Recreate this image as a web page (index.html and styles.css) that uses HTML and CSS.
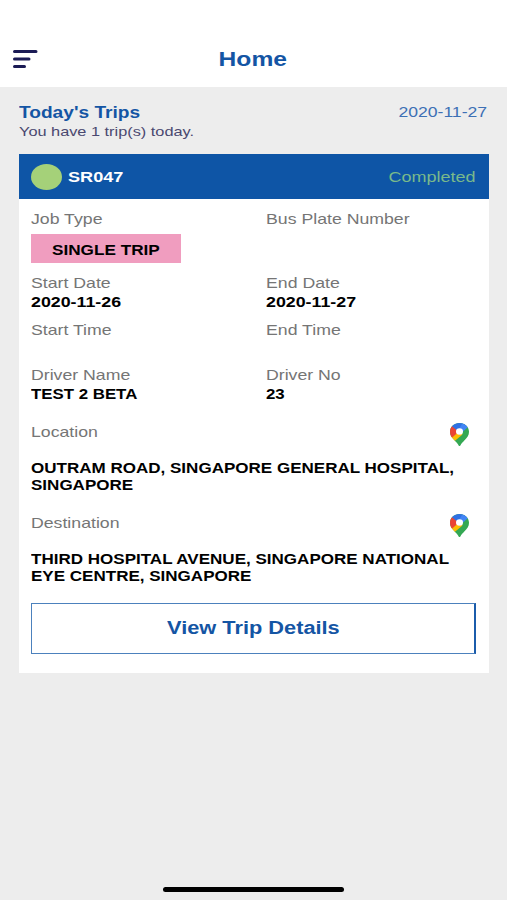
FILE: index.html
```html
<!DOCTYPE html>
<html lang="en">
<head>
<meta charset="utf-8">
<title>Home</title>
<link rel="stylesheet" href="styles.css">
</head>
<body>
<svg class="defs" width="0" height="0" aria-hidden="true">
  <defs>
    <clipPath id="pin-shape"><path d="M9.5 0C4.2 0 0 3.900 0 8.800c0 3.500 1.700 5.500 4 8 2.200 2.400 3.800 3.800 4.500 5.500.4 1 1.600 1 2 0 .7-1.700 2.300-3.100 4.500-5.500 2.300-2.500 4-4.500 4-8C19 3.900 14.800 0 9.500 0z"/></clipPath>
    <symbol id="pin" viewBox="0 0 19 23">
      <g clip-path="url(#pin-shape)">
        <path fill="#34a853" d="M0 0h19v23H0z"/>
        <path fill="#fbbc04" d="M-1 14 6.500 5.500 12.500 11.500 3.500 19z"/>
        <path fill="#ea4335" d="M-1 2.500 2 2.800 9 8.500 1 15.500-1 15z"/>
        <path fill="#2f70e4" d="M1.800 3 4-1h9l4.300 4.500L9.500 12 7 7.500z"/>
        <path fill="#4285f4" d="M12.500 0 18 4 12 9.500 8.500 7z"/>
      </g>
      <ellipse cx="9.500" cy="8.500" rx="3.500" ry="3.200" fill="#fff"/>
    </symbol>
  </defs>
</svg>
<div class="screen">
  <header class="topbar">
    <svg class="menu" width="26" height="20" viewBox="0 0 26 20"><path d="M2.500 2.500H24M2.500 10H17M2.500 17.500H12.500"/></svg>
    <h1 class="title"><span class="t t-center">Home</span></h1>
  </header>
  <main class="content">
    <section class="summary">
      <div>
        <h2 class="heading"><span class="t">Today's Trips</span></h2>
        <p class="sub"><span class="t">You have 1 trip(s) today.</span></p>
      </div>
      <p class="date"><span class="t t-right">2020-11-27</span></p>
    </section>
    <article class="card">
      <div class="card-head">
        <span class="dot"></span>
        <span class="code"><span class="t">SR047</span></span>
        <span class="status"><span class="t t-right">Completed</span></span>
      </div>
      <div class="card-body">
        <div class="row job">
          <div><p class="label"><span class="t">Job Type</span></p><p class="badge"><span class="t t-center">SINGLE TRIP</span></p></div>
          <div><p class="label"><span class="t">Bus Plate Number</span></p></div>
        </div>
        <div class="row dates">
          <div><p class="label"><span class="t">Start Date</span></p><p class="value"><span class="t">2020-11-26</span></p></div>
          <div><p class="label"><span class="t">End Date</span></p><p class="value"><span class="t">2020-11-27</span></p></div>
        </div>
        <div class="row times">
          <div><p class="label"><span class="t">Start Time</span></p></div>
          <div><p class="label"><span class="t">End Time</span></p></div>
        </div>
        <div class="row driver">
          <div><p class="label"><span class="t">Driver Name</span></p><p class="value"><span class="t">TEST 2 BETA</span></p></div>
          <div><p class="label"><span class="t">Driver No</span></p><p class="value"><span class="t">23</span></p></div>
        </div>
        <section class="place">
          <div class="place-head"><p class="label"><span class="t">Location</span></p><svg class="pin" width="19" height="23"><use href="#pin"/></svg></div>
          <p class="address"><span class="t">OUTRAM ROAD, SINGAPORE GENERAL HOSPITAL,<br>SINGAPORE</span></p>
        </section>
        <section class="place">
          <div class="place-head"><p class="label"><span class="t">Destination</span></p><svg class="pin" width="19" height="23"><use href="#pin"/></svg></div>
          <p class="address"><span class="t">THIRD HOSPITAL AVENUE, SINGAPORE NATIONAL<br>EYE CENTRE, SINGAPORE</span></p>
        </section>
        <button class="details"><span class="t t-center">View Trip Details</span></button>
      </div>
    </article>
  </main>
  <footer class="home-bar"><span></span></footer>
</div>
</body>
</html>
```
FILE: styles.css
```css
* { box-sizing: border-box; }
body, h1, h2, p { margin: 0; }
body { font-family: "Liberation Sans", Arial, sans-serif; background: #ededed; }
.defs { display: block; height: 0; }
.screen { width: 507px; height: 900px; display: flex; flex-direction: column; overflow: hidden; }

/* Extended-width lettering */
.t { display: inline-block; white-space: nowrap; transform: scaleX(var(--stretch, 1.23)); transform-origin: left center; }
.t-right { transform-origin: right center; }
.t-center { transform-origin: center; }

.topbar { height: 87px; padding: 31px 13px 0 12px; background: #fff; display: grid; grid-template-columns: 26px 1fr 26px; align-items: center; }
.menu path { fill: none; stroke: #1b1b55; stroke-width: 3; stroke-linecap: round; }
.title { text-align: center; font-size: 20px; line-height: 24px; color: #1455a4; }

.content { flex: 1; padding: 16px 18px 0 19px; }
.summary { display: flex; justify-content: space-between; height: 51px; padding-right: 2px; }
.heading { font-size: 16px; line-height: 20px; color: #1455a4; --stretch: 1.195; }
.sub { font-size: 13px; line-height: 17px; color: #4a4870; --stretch: 1.255; }
.date { font-size: 14.3px; line-height: 18px; color: #3d70b5; }

.card { height: 519px; background: #fff; }
.card-head { height: 45px; padding: 0 13px 0 12px; background: #0e55a6; display: flex; align-items: center; }
.dot { width: 31px; height: 26px; border-radius: 50%; background: #a5d179; margin-right: 6px; }
.code { font-size: 14.5px; font-weight: bold; color: #fff; --stretch: 1.25; }
.status { margin-left: auto; font-size: 15px; color: #79b98b; --stretch: 1.2; }

.card-body { padding: 10px 12px 0; }
.row { display: grid; grid-template-columns: 235px 1fr; }
.job { height: 64px; }
.dates { height: 47px; --stretch: 1.29; }
.times { height: 45px; }
.driver { height: 57px; --stretch: 1.22; }
.label { font-size: 14.5px; line-height: 20px; color: #757575; --stretch: 1.22; }
.value { font-size: 13.8px; line-height: 19px; font-weight: bold; color: #000; }
.badge { width: 150px; height: 29px; margin-top: 5px; background: #f09dbf; font-size: 14.3px; line-height: 32px; font-weight: bold; text-align: center; color: #000; --stretch: 1.2; }

.place { height: 91px; }
.place-head { height: 38px; display: flex; justify-content: space-between; align-items: flex-start; padding-right: 8px; }
.pin { margin-top: 1px; }
.address { font-size: 14px; line-height: 16.5px; font-weight: bold; color: #000; --stretch: 1.216; }

.details { display: block; width: 445px; height: 51px; margin-top: -1px; padding: 0; background: #fff; border: 1px solid #4c81bd; border-right: 2px solid #1b5cab; font: bold 18px/49px "Liberation Sans", Arial, sans-serif; color: #1455a4; --stretch: 1.21; }

.home-bar { height: 14px; display: flex; justify-content: center; align-items: flex-start; }
.home-bar span { width: 181px; height: 5px; border-radius: 3px; background: #000; margin-top: 1px; }
```
